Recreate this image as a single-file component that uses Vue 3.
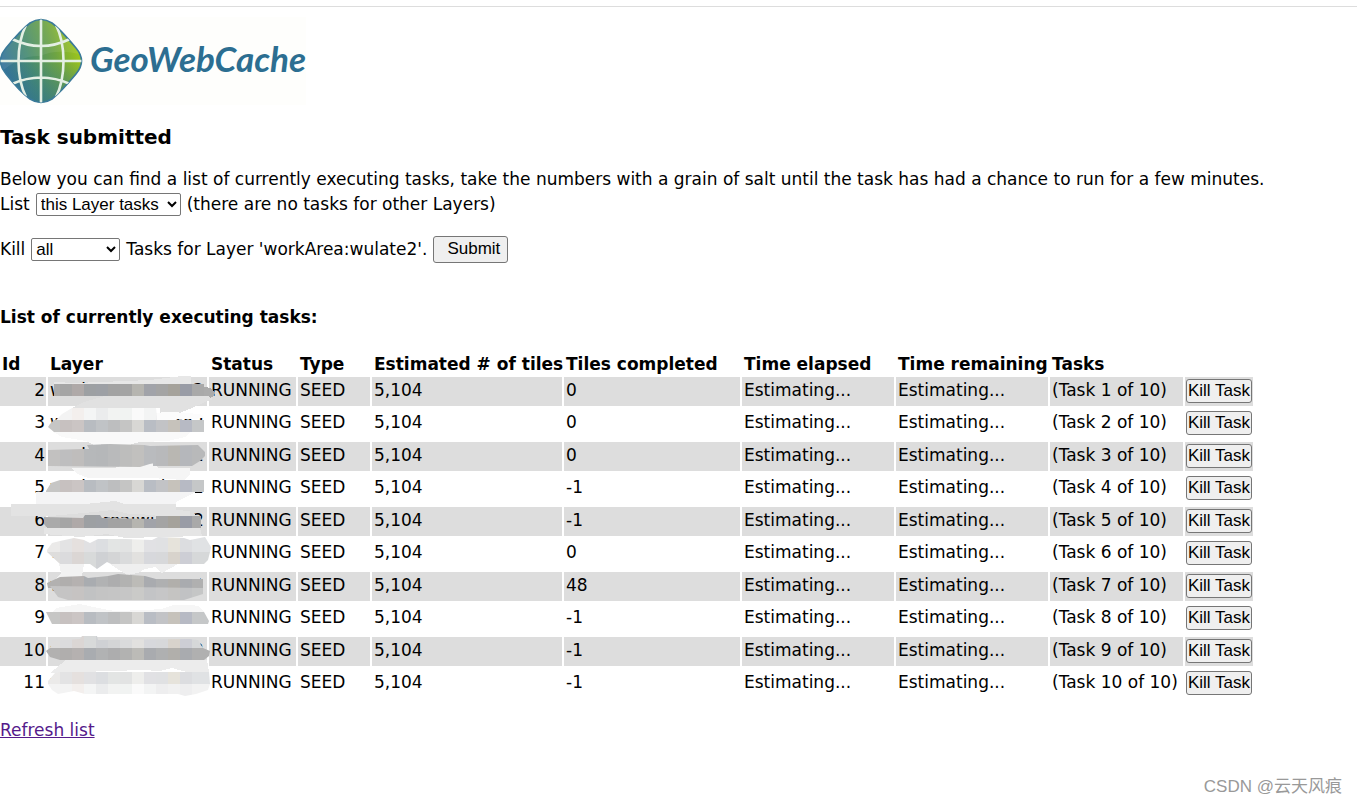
<script setup>
import { ref } from 'vue'

const listFilter = ref('layer')
const killScope = ref('all')
const completed = ['0', '0', '0', '-1', '-1', '0', '48', '-1', '-1', '-1']

const tasks = completed.map((done, i) => ({
  id: i + 2,
  layer: 'workArea:wulate2',
  status: 'RUNNING',
  type: 'SEED',
  tiles: '5,104',
  done,
  label: `(Task ${i + 1} of 10)`,
}))

// Pale brush strokes under the mosaic that hides the layer names
const strokes = [
  { fill: '#e7e7e7', points: '54,382 75,383 150,380 182,376 191,376 191,386 54,386' },
  { fill: '#ababab', points: '200,386 210,388 215,393 214,396 209,399 200,396' },
  { fill: '#e1e1e1', points: '72,408 84,402 105,396 208,396 213,399 205,402 192,408 172,416 160,418 160,408' },
  { fill: '#fcfcfc', points: '150,413 172,412 200,414 204,418 192,419 160,420 150,420' },
  { fill: '#f9f9f9', points: '52,431 192,431 185,437 168,441 140,442 125,446 107,444 94,445 86,441 62,437' },
  { fill: '#f5f5f5', points: '71,468 115,468 132,462 155,464 158,468 190,468 190,474 185,480 150,478 88,478 78,474' },
  { fill: '#f4f4f5', points: '36,492 196,492 176,502 176,508 125,506 100,508 36,504' },
  { fill: '#dddddd', points: '48,508 190,508 196,516 48,518' },
  { fill: '#e3e3e3', points: '11,504 36,504 85,504 115,501 125,504 176,504 176,510 190,511 190,516 160,516 140,514 129,514 112,510 95,512 50,516 11,516' },
  { fill: '#e5e5e5', points: '44,528 200,528 202,536 125,538 107,534 80,537 44,534' },
  { fill: '#f2f2f2', points: '59,564 84,564 82,576 76,579 55,579 61,573' },
  { fill: '#efefef', points: '110,564 178,564 171,568 162,573 155,567 145,569 138,573 127,575' },
  { fill: '#dddddd', points: '145,574 196,574 200,579 145,580' },
  { fill: '#f6f6f6', points: '52,613 56,608 80,604 98,608 115,611 145,610 162,609 173,605 190,605 199,606 204,612' },
  { fill: '#ececec', points: '66,660 207,660 209,672 190,673 172,668 160,671 142,670 50,673' },
]

// One colour per 12px block, starting at x = 48
const soft = ['#f3f3f3', '#f3f3f3', '#f3efed', '#f4f5f5', '#ebeced', '#f2f3f2', '#f1f3f2', '#fafafa', '#f3f4f4', '#eeeeef', '#f1f1f1', '#eeeeef', '#f2f2f2']
const light = ['#dedddc', '#dbdbdd', '#dbd6d4', '#d8dada', '#cfd1d4', '#d4d5d6', '#dadbdc', '#e2e1df', '#d7d8dc', '#d7d8da', '#d8d3cc', '#cdced5', '#d6d8d9']
const pale = ['#ebeae9', '#e3e3e4', '#e5e0de', '#e1e1e3', '#dcdee1', '#e3e5e4', '#e2e3e3', '#eeeeec', '#e1e1e4', '#e0e1e3', '#e6e3db', '#dcdde0', '#e0e2e4']
const mid = ['#c6c6c5', '#c7c1c0', '#cbc5c4', '#b8bcc1', '#c0c3c6', '#bdbebf', '#c5c5c4', '#d8d7d4', '#b9bdc4', '#c2c3c6', '#c6c2bb', '#b7bac4', '#c5c7c8']
const silver = ['#c4c4c4', '#c5c4c4', '#c6c3c2', '#c1c2c3', '#c4c4c4', '#c5c5c5', '#c6c6c6', '#cacac8', '#c3c4c6', '#c6c6c7', '#c5c4c2', '#c1c2c4', '#c5c6c6']
const grey = ['#c2c1c0', '#bebebf', '#bfbdbc', '#b6b8ba', '#b5b7b9', '#b9babb', '#bdbdbc', '#c1c0be', '#b9bbbe', '#b8b9bb', '#b9b7b2', '#b5b7bb', '#b8b9ba']
const dark = ['#aaaaaa', '#a5a5a5', '#afa9a8', '#9da0a3', '#9da0a5', '#a2a2a2', '#a4a4a4', '#b6b5b0', '#a1a3a9', '#a4a4a4', '#a5a29b', '#999ca6', '#a9a9a9']
const stone = ['#b2b1b0', '#b0aead', '#b5b1b0', '#a9acb0', '#b1b2b3', '#adadae', '#b2b2b1', '#bcbbb7', '#a9abaf', '#afb0b1', '#b1afab', '#a9abaf', '#b0b0b0']

const bands = [
  { y: 384, colors: dark, points: '54,384 204,384 204,396 54,396' },
  { y: 408, colors: soft, points: '72,408 156,408 157,420 56,420 62,414' },
  { y: 420, colors: mid, points: '50,424 54,420 204,420 204,432 54,432 48,427' },
  { y: 444, colors: grey, points: '87,445 110,444 144,445 150,446 198,445 205,452 205,456 93,456' },
  { y: 456, colors: grey, points: '48,450 83,449 90,449 100,456 205,456 200,461 192,466 153,466 153,463 140,467 48,466' },
  { y: 480, colors: mid, points: '46,491 51,483 60,480 204,480 204,492 46,492' },
  { y: 516, colors: dark, points: '44,517 83,518 85,515 100,515 102,518 156,519 156,516 201,516 201,528 47,528 44,524' },
  { y: 540, colors: pale, points: '47,550 52,543 60,541 74,538 84,540 90,543 98,539 125,539 152,540 158,537 184,538 190,540 205,537 211,547 210,552 47,552' },
  { y: 552, colors: light, points: '47,552 210,552 208,560 204,564 111,564 107,562 97,569 90,564 60,564' },
  { y: 576, colors: stone, points: '47,583 60,577 84,576 88,578 108,576 118,574 145,576 156,579 203,579 203,588 48,588' },
  { y: 588, colors: silver, points: '50,586 203,588 203,594 184,600 68,600 58,597' },
  { y: 612, colors: mid, points: '46,612 204,612 209,621 208,624 52,624' },
  { y: 636, colors: light, points: '50,648 52,641 80,639 82,636 97,636 98,640 190,639 198,640 203,648' },
  { y: 648, colors: stone, points: '46,651 50,648 203,648 210,651 209,656 204,660 60,660 50,657' },
  { y: 672, colors: pale, points: '48,681 55,673 60,672 209,672 210,684 48,684' },
  { y: 684, colors: soft, points: '48,684 210,684 208,690 196,694 185,696 178,694 85,694 74,691 58,694 52,690' },
]
</script>

<template>
  <main class="page">
    <header class="logo">
      <svg width="306" height="88" viewBox="0 0 306 88" role="img" aria-label="GeoWebCache">
        <defs>
          <linearGradient id="globe" x1="0.1" y1="0.7" x2="0.95" y2="0.4">
            <stop offset="0" stop-color="#35749a" />
            <stop offset="0.35" stop-color="#478b70" />
            <stop offset="0.7" stop-color="#6da344" />
            <stop offset="1" stop-color="#9bc41c" />
          </linearGradient>
          <linearGradient id="shade" x1="0" y1="0" x2="0" y2="1">
            <stop offset="0.5" stop-color="#2c6e91" stop-opacity="0" />
            <stop offset="1" stop-color="#2c6e91" stop-opacity="0.5" />
          </linearGradient>
          <clipPath id="globeClip">
            <path d="M30 6Q41-1 52 6Q60 12 76 31Q87 44 76 57Q61 75 52 82Q41 89 30 82Q20 75 6 57Q-5 44 6 31Q21 13 30 6Z" />
          </clipPath>
        </defs>
        <g clip-path="url(#globeClip)">
          <path d="M0 0H82V88H0Z" fill="url(#globe)" />
          <path d="M0 0H82V88H0Z" fill="url(#shade)" />
          <path d="M0 56Q20 38 40 39Q58 31 82 38V0H0Z" fill="#fff" opacity="0.08" />
        </g>
        <path d="M30 6Q41-1 52 6Q60 12 76 31Q87 44 76 57Q61 75 52 82Q41 89 30 82Q20 75 6 57Q-5 44 6 31Q21 13 30 6Z" fill="none" stroke="#3a7a9a" stroke-width="1.6" />
        <g clip-path="url(#globeClip)" fill="none" stroke="#e4efe4" stroke-width="2.6">
          <path d="M41 2V87M0 44H82M26 8C16 28 16 60 26 80M56 8C66 28 66 60 56 80M12 22Q41 36 70 22M12 67Q41 54 70 67" />
        </g>
        <text class="logo-text" x="90" y="55">GeoWebCache</text>
      </svg>
    </header>

    <h3>Task submitted</h3>
    <p>Below you can find a list of currently executing tasks, take the numbers with a grain of salt until the task has had a chance to run for a few minutes.</p>

    <form class="line" @submit.prevent>
      <label for="list">List</label>
      <select id="list" v-model="listFilter" class="list-select">
        <option value="layer">this Layer tasks</option>
      </select>
      <span>(there are no tasks for other Layers)</span>
    </form>
    <form class="line kill" @submit.prevent>
      <label for="kill">Kill</label>
      <select id="kill" v-model="killScope" class="kill-select">
        <option value="all">all</option>
        <option value="running">running</option>
        <option value="pending">pending</option>
      </select>
      <span>Tasks for Layer 'workArea:wulate2'.</span>
      <button class="submit">Submit</button>
    </form>

    <h4>List of currently executing tasks:</h4>
    <div class="list">
      <table>
        <colgroup>
          <col v-for="n in 10" :key="n" :class="`c${n}`">
        </colgroup>
        <thead>
          <tr>
            <th class="first">Id</th><th>Layer</th><th>Status</th><th>Type</th><th>Estimated # of tiles</th>
            <th>Tiles completed</th><th>Time elapsed</th><th>Time remaining</th><th>Tasks</th><td></td>
          </tr>
        </thead>
        <tbody>
          <tr v-for="t in tasks" :key="t.id">
            <td class="id">{{ t.id }}</td>
            <td>{{ t.layer }}</td>
            <td>{{ t.status }}</td>
            <td>{{ t.type }}</td>
            <td>{{ t.tiles }}</td>
            <td>{{ t.done }}</td>
            <td>Estimating...</td>
            <td>Estimating...</td>
            <td>{{ t.label }}</td>
            <td class="action"><button class="kill-task">Kill Task</button></td>
          </tr>
        </tbody>
      </table>
      <svg class="mosaic" width="216" height="350" viewBox="0 350 216 350" shape-rendering="crispEdges" aria-hidden="true">
        <polygon v-for="(s, i) in strokes" :key="i" :points="s.points" :fill="s.fill" />
        <g v-for="(b, i) in bands" :key="b.y">
          <clipPath :id="`band${i}`"><polygon :points="b.points" /></clipPath>
          <g :clip-path="`url(#band${i})`">
            <rect x="36" :y="b.y - 8" width="12" height="28" :fill="b.colors[0]" />
            <rect v-for="(c, k) in b.colors" :key="k" :x="48 + k * 12" :y="b.y - 8" width="12" height="28" :fill="c" />
            <rect x="204" :y="b.y - 8" width="12" height="28" :fill="b.colors[12]" />
          </g>
        </g>
      </svg>
    </div>

    <a class="refresh" href="#">Refresh list</a>
    <div class="watermark">CSDN @云天风痕</div>
  </main>
</template>

<style>
body { background: #fff; }
</style>

<style scoped>
.page {
  position: relative;
  box-sizing: border-box;
  min-height: 100vh;
  padding-top: 6px;
  color: #000;
  font: 17px/22px Verdana, "DejaVu Sans", sans-serif;
}
.logo {
  height: 98px;
  padding-top: 10px;
  box-sizing: border-box;
  border-top: 1px solid #ddd;
}
.logo svg { display: block; background: #fefefc; }
.logo-text {
  fill: #2c6e91;
  font: italic bold 35px Lato, sans-serif;
}
h3, h4, p { margin: 0; }
h3 { margin-top: 20px; font-size: 20px; line-height: 26px; }
p { margin-top: 18px; }
.line { display: flex; align-items: center; height: 28px; gap: 6px; }
.kill { margin-top: 17px; }
select, button {
  box-sizing: border-box;
  border: 1px solid #767676;
  border-radius: 3px;
  color: #000;
  font: 17px/20px "Liberation Sans", Arial, sans-serif;
}
select { height: 23px; padding: 0; border-radius: 2px; background: #fff; }
.list-select { width: 145px; }
.kill-select { width: 89px; }
button { background: #efefef; }
.submit { width: 75px; height: 27px; padding: 0 0 0 6px; }
h4 { margin-top: 43px; font-size: 17px; }
.list { position: relative; margin-top: 22px; }
table { width: 1253px; table-layout: fixed; border-spacing: 2px 3px; margin-left: -2px; }
th, td { padding: 0 2px; white-space: nowrap; text-align: left; }
thead tr { height: 21px; }
th { padding-top: 2px; line-height: 19px; }
tbody td { padding-bottom: 3px; }
tbody tr { height: 29px; }
tbody tr:nth-child(even) { height: 30px; }
tbody tr:nth-child(even) td { padding-bottom: 5px; }
tbody tr:nth-child(odd) td { background: #ddd; }
tbody td.id { padding-right: 1px; text-align: right; }
.c1 { width: 46px; }
.c2 { width: 159px; }
.c3 { width: 87px; }
.c4 { width: 72px; }
.c5 { width: 190px; }
.c6 { width: 176px; }
.c7 { width: 152px; }
.c8 { width: 152px; }
.c9 { width: 133px; }
.c10 { width: 68px; }
tbody tr td.action { padding: 0 1px 1px; }
tbody tr:nth-child(even) td.action { padding: 0 1px 3px; }
.kill-task { display: block; width: 66px; height: 24px; padding: 0; }
.mosaic { position: absolute; top: 0; left: 0; pointer-events: none; }
.refresh { display: inline-block; margin-top: 17px; color: #551a8b; }
.watermark {
  position: absolute;
  right: 15px;
  bottom: 6px;
  color: #999;
  font: 17px/24px "Liberation Sans", "Noto Sans CJK SC", sans-serif;
}
</style>
